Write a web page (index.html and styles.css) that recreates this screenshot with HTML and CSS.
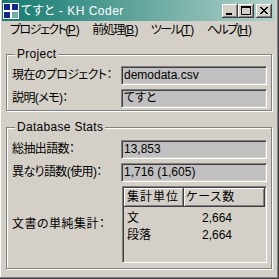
FILE: index.html
```html
<!DOCTYPE html>
<html lang="ja">
<head>
<meta charset="utf-8">
<title>てすと - KH Coder</title>
<link rel="stylesheet" href="styles.css">
</head>
<body>
<div class="window">
  <div class="titlebar">
    <svg class="app-icon" width="16" height="16" viewBox="0 0 16 16">
      <rect x="0" y="0" width="16" height="16" fill="#ffffff"/>
      <rect x="1" y="1" width="6" height="6" fill="#14268c"/>
      <rect x="9" y="1" width="6" height="6" fill="#14268c"/>
      <rect x="1" y="9" width="6" height="6" fill="#14268c"/>
      <rect x="9" y="9" width="6" height="6" fill="#6fb0a4"/>
    </svg>
    <span class="title">てすと - KH Coder</span>
    <div class="ctrls">
      <span class="cbtn"><svg width="14" height="12" viewBox="0 0 14 12"><rect x="3" y="8" width="6" height="2" fill="#000"/></svg></span>
      <span class="cbtn"><svg width="14" height="12" viewBox="0 0 14 12"><path d="M2.5 1.5h9v8h-9z" fill="none" stroke="#000"/><rect x="2" y="1" width="10" height="2" fill="#000"/></svg></span>
      <span class="cbtn gap"><svg width="14" height="12" viewBox="0 0 14 12"><path d="M3 2l7 7M4 2l7 7M10 2l-7 7M11 2l-7 7" stroke="#000" stroke-width="1"/></svg></span>
    </div>
  </div>
  <div class="menubar">
    <span class="menu">プロジェクト(<u>P</u>)</span>
    <span class="menu">前処理(<u>B</u>)</span>
    <span class="menu">ツール(<u>T</u>)</span>
    <span class="menu">ヘルプ(<u>H</u>)</span>
  </div>
  <div class="content">
    <section class="group project">
      <span class="group-title">Project</span>
      <div class="form">
        <span class="label">現在のプロジェクト：</span>
        <div class="entry">demodata.csv</div>
        <span class="label">説明(メモ)：</span>
        <div class="entry">てすと</div>
      </div>
    </section>
    <section class="group stats">
      <span class="group-title">Database Stats</span>
      <div class="form">
        <span class="label">総抽出語数：</span>
        <div class="entry">13,853</div>
        <span class="label">異なり語数(使用)：</span>
        <div class="entry">1,716 (1,605)</div>
        <span class="label wide">文書の単純集計：</span>
        <div class="list">
          <div class="hd c1">集計単位</div>
          <div class="hd c2">ケース数</div>
          <div class="cell first">文</div>
          <div class="cell num">2,664</div>
          <div class="cell first">段落</div>
          <div class="cell num">2,664</div>
        </div>
      </div>
    </section>
  </div>
</div>
</body>
</html>
```

FILE: styles.css
```css
html, body {
  margin: 0;
  padding: 0;
  background: #d4d0c8;
}

body {
  font-family: "Liberation Sans", "Noto Sans CJK JP", sans-serif;
  font-size: 12px;
  font-feature-settings: "palt";
  color: #000;
}

.window {
  width: 279px;
  height: 279px;
  box-sizing: border-box;
  padding: 0 4px 0 2px;
  background: #d4d0c8;
  box-shadow: inset -1px -1px 0 #404040, inset -2px -2px 0 #808080, inset 1px 0 0 #ffffff;
  overflow: hidden;
}

.titlebar {
  height: 21px;
  display: flex;
  align-items: center;
  background: linear-gradient(to right, #137a70, #b2d2ca);
  color: #fff;
  padding: 0 3px 0 1px;
}

.app-icon {
  flex: none;
  margin-right: 2px;
}

.title {
  flex: 1;
  white-space: nowrap;
  line-height: 16px;
  letter-spacing: 0.5px;
}

.ctrls {
  display: flex;
  align-items: center;
}

.cbtn {
  width: 16px;
  height: 14px;
  box-sizing: border-box;
  background: #d4d0c8;
  box-shadow: inset -1px -1px 0 #404040, inset 1px 1px 0 #ffffff, inset -2px -2px 0 #808080;
  display: flex;
  align-items: center;
  justify-content: center;
}

.cbtn svg {
  display: block;
}

.cbtn.gap {
  margin-left: 2px;
}

.menubar {
  height: 19px;
  display: flex;
  align-items: center;
  padding-left: 1px;
}

.menu {
  padding: 0 7px;
  line-height: 19px;
  letter-spacing: -1.5px;
  white-space: nowrap;
}

.menu u {
  letter-spacing: 0;
}

.content {
  padding: 14px 3px 0 4px;
}

.group {
  position: relative;
  border: 1px solid #808080;
  box-shadow: 1px 1px 0 #ffffff, inset 1px 1px 0 #ffffff;
  padding: 11px 4px 2px 5px;
}

.group.stats {
  margin-top: 16px;
  padding-top: 12px;
  padding-bottom: 5px;
}

.group-title {
  position: absolute;
  top: -8px;
  left: 8px;
  padding: 0 2px;
  line-height: 14px;
  background: #d4d0c8;
  letter-spacing: 0.3px;
  white-space: nowrap;
}

.form {
  display: grid;
  grid-template-columns: 109px 146px;
  grid-auto-rows: 19px;
  row-gap: 4px;
  align-items: center;
}

.stats .form {
  grid-template-rows: 19px 19px 77px;
}

.label {
  white-space: nowrap;
  line-height: 19px;
  letter-spacing: -0.6px;
}

.label.wide {
  letter-spacing: 0.5px;
}

.entry {
  height: 19px;
  box-sizing: border-box;
  background: #c0c0c0;
  border-top: 1px solid #808080;
  border-left: 1px solid #808080;
  border-right: 1px solid #ffffff;
  border-bottom: 1px solid #ffffff;
  box-shadow: inset 1px 1px 0 #404040, inset -1px -1px 0 #d4d0c8;
  padding-left: 2px;
  line-height: 17px;
  white-space: nowrap;
}

.list {
  height: 77px;
  align-self: stretch;
  margin-left: 1px;
  box-sizing: border-box;
  border-top: 1px solid #808080;
  border-left: 1px solid #808080;
  border-right: 1px solid #ffffff;
  border-bottom: 1px solid #ffffff;
  box-shadow: inset 1px 1px 0 #404040, inset -1px -1px 0 #d4d0c8;
  padding: 1px;
  display: grid;
  grid-template-columns: 60px 48px 1fr;
  grid-auto-rows: 19px;
  align-content: start;
}

.hd {
  height: 19px;
  box-sizing: border-box;
  background: #d4d0c8;
  box-shadow: inset -1px -1px 0 #404040, inset 1px 1px 0 #ffffff, inset -2px -2px 0 #808080;
  padding-left: 3px;
  line-height: 19px;
  letter-spacing: 1px;
  white-space: nowrap;
}

.hd.c2 {
  grid-column: 2 / 4;
  padding-left: 2px;
}

.cell {
  line-height: 19px;
  white-space: nowrap;
}

.cell.first {
  grid-column: 1;
  padding-left: 3px;
}

.cell.num {
  grid-column: 2;
  text-align: right;
}

.list .cell:nth-child(3),
.list .cell:nth-child(4) {
  margin-top: 2px;
}
```
